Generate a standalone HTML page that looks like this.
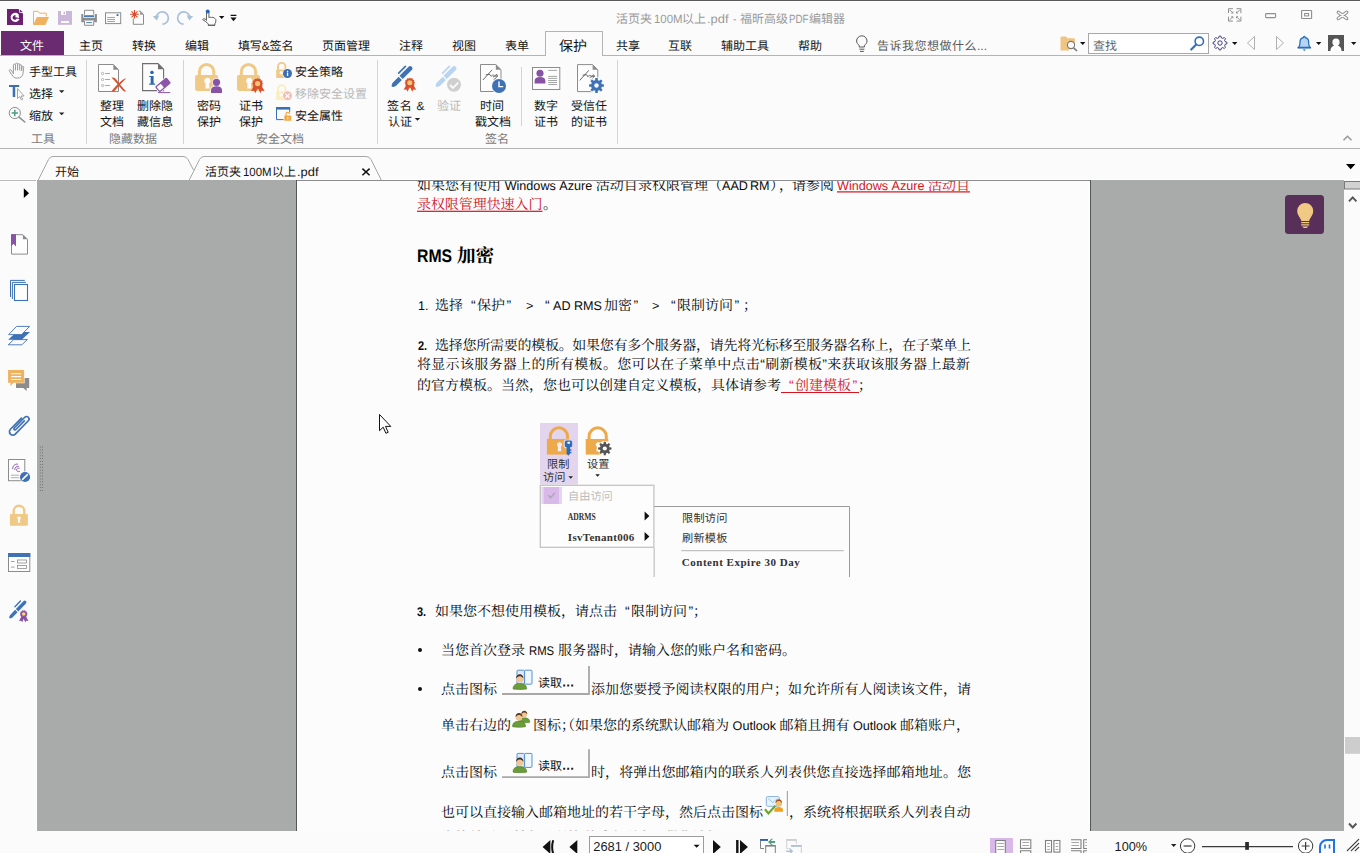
<!DOCTYPE html>
<html lang="zh-CN"><head><meta charset="utf-8"><title>Foxit PDF Editor</title>
<style>
html,body{margin:0;padding:0}
body{width:1360px;height:853px;overflow:hidden;position:relative;background:#fbfbfb;font-family:"Liberation Sans",sans-serif}
.b,.i,.t{position:absolute;display:block}
.t{overflow:visible;text-rendering:geometricPrecision}
.t text,.i text{font-family:"Liberation Sans","Noto Sans CJK SC",sans-serif}
.t text.sf{font-family:"Liberation Sans","Noto Serif CJK SC",serif}
.mono text{font-family:"Liberation Mono",monospace}
#pg{position:absolute;left:0;top:0;width:1360px;height:853px;overflow:hidden}
</style></head>
<body>
<div id="pg">
<div class="b" style="left:0px;top:0px;width:1360px;height:853px;background:#fbfbfb;"></div>
<div class="b" style="left:0px;top:0px;width:1360px;height:1px;background:#5a5a5a;"></div>
<div class="b" style="left:0px;top:1px;width:1360px;height:1px;background:#ffffff;"></div>
<div class="b" style="left:0px;top:55px;width:546px;height:1px;background:#b4b4b4;"></div>
<div class="b" style="left:602px;top:55px;width:758px;height:1px;background:#b4b4b4;"></div>
<div class="b" style="left:545px;top:31px;width:58px;height:1px;background:#b4b4b4;"></div>
<div class="b" style="left:545px;top:31px;width:1px;height:25px;background:#b4b4b4;"></div>
<div class="b" style="left:602px;top:31px;width:1px;height:25px;background:#b4b4b4;"></div>
<div class="b" style="left:1px;top:31px;width:63px;height:24px;background:#6b2b70;"></div>
<div class="b" style="left:0px;top:148px;width:1360px;height:1px;background:#b4b4b4;"></div>
<div class="b" style="left:86px;top:60px;width:1px;height:84px;background:#d4d4d4;"></div>
<div class="b" style="left:183px;top:60px;width:1px;height:84px;background:#d4d4d4;"></div>
<div class="b" style="left:377px;top:60px;width:1px;height:84px;background:#d4d4d4;"></div>
<div class="b" style="left:617px;top:60px;width:1px;height:84px;background:#d4d4d4;"></div>
<div class="b" style="left:521px;top:67px;width:1px;height:59px;background:#d4d4d4;"></div>
<div class="b" style="left:0px;top:179px;width:38px;height:1px;background:#ffffff;"></div>
<div class="b" style="left:382px;top:179px;width:978px;height:1px;background:#ffffff;"></div>
<div class="b" style="left:36px;top:181px;width:1px;height:651px;background:#ffffff;"></div>
<div class="b" style="left:36px;top:831px;width:1308px;height:1px;background:#ffffff;"></div>
<div class="b" style="left:0px;top:181px;width:36px;height:1px;background:#ffffff;"></div>
<div class="b" style="left:37px;top:180px;width:1307px;height:651px;background:#a9abaa;"></div>
<div class="b" style="left:296px;top:180px;width:795px;height:651px;background:#565656;"></div>
<div class="b" style="left:297px;top:181px;width:793px;height:650px;background:#ffffff;"></div>
<div class="b" style="left:298px;top:181px;width:791px;height:650px;background:#fcfcfc;"></div>
<div class="b" style="left:297px;top:180px;width:793px;height:1px;background:#8c8c8c;"></div>
<svg class="t" role="img" aria-label="活页夹" style="left:616.3px;top:11px" width="38" height="18" viewBox="0 -12 38 18" fill="#9a9a9a"><text x="0" y="0" font-size="12" textLength="36" lengthAdjust="spacing">活页夹</text></svg>
<svg class="t" role="img" aria-label="100M" style="left:653.6px;top:11px" width="30.6" height="18" viewBox="0 -12 30.6 18" fill="#9a9a9a"><text x="0" y="0" font-size="12" textLength="28.6" lengthAdjust="spacingAndGlyphs">100M</text></svg>
<svg class="t" role="img" aria-label="以上" style="left:682.2px;top:11px" width="26" height="18" viewBox="0 -12 26 18" fill="#9a9a9a"><text x="0" y="0" font-size="12" textLength="24" lengthAdjust="spacing">以上</text></svg>
<svg class="t" role="img" aria-label=".pdf" style="left:707px;top:11px" width="23.5" height="18" viewBox="0 -12 23.5 18" fill="#9a9a9a"><text x="0" y="0" font-size="12" textLength="21.5" lengthAdjust="spacingAndGlyphs">.pdf</text></svg>
<svg class="t" role="img" aria-label="-" style="left:733px;top:11px" width="5.4" height="18" viewBox="0 -12 5.4 18" fill="#9a9a9a"><text x="0" y="0" font-size="12" textLength="3.4" lengthAdjust="spacingAndGlyphs">-</text></svg>
<svg class="t" role="img" aria-label="福昕高级" style="left:740.4px;top:11px" width="50" height="18" viewBox="0 -12 50 18" fill="#9a9a9a"><text x="0" y="0" font-size="12" textLength="48" lengthAdjust="spacing">福昕高级</text></svg>
<svg class="t" role="img" aria-label="PDF" style="left:789.4px;top:11px" width="21.6" height="18" viewBox="0 -12 21.6 18" fill="#9a9a9a"><text x="0" y="0" font-size="12" textLength="19.6" lengthAdjust="spacingAndGlyphs">PDF</text></svg>
<svg class="t" role="img" aria-label="编辑器" style="left:809.3px;top:11px" width="38" height="18" viewBox="0 -12 38 18" fill="#9a9a9a"><text x="0" y="0" font-size="12" textLength="36" lengthAdjust="spacing">编辑器</text></svg>
<svg class="t" role="img" aria-label="文件" style="left:19.5px;top:38px" width="26" height="18" viewBox="0 -12 26 18" fill="#ffffff"><text x="0" y="0" font-size="12" textLength="24" lengthAdjust="spacing">文件</text></svg>
<svg class="t" role="img" aria-label="主页" style="left:78.5px;top:38px" width="26" height="18" viewBox="0 -12 26 18" fill="#141414"><text x="0" y="0" font-size="12" textLength="24" lengthAdjust="spacing">主页</text></svg>
<svg class="t" role="img" aria-label="转换" style="left:131.5px;top:38px" width="26" height="18" viewBox="0 -12 26 18" fill="#141414"><text x="0" y="0" font-size="12" textLength="24" lengthAdjust="spacing">转换</text></svg>
<svg class="t" role="img" aria-label="编辑" style="left:184.5px;top:38px" width="26" height="18" viewBox="0 -12 26 18" fill="#141414"><text x="0" y="0" font-size="12" textLength="24" lengthAdjust="spacing">编辑</text></svg>
<svg class="t" role="img" aria-label="填写&amp;签名" style="left:237.5px;top:38px" width="57.5" height="18" viewBox="0 -12 57.5 18" fill="#141414"><text x="0" y="0" font-size="12" textLength="23.7" lengthAdjust="spacing">填写</text><text x="23.75" y="0" font-size="12" textLength="8" lengthAdjust="spacingAndGlyphs">&amp;</text><text x="31.6" y="0" font-size="12" textLength="23.9" lengthAdjust="spacing">签名</text></svg>
<svg class="t" role="img" aria-label="页面管理" style="left:321.5px;top:38px" width="50" height="18" viewBox="0 -12 50 18" fill="#141414"><text x="0" y="0" font-size="12" textLength="48" lengthAdjust="spacing">页面管理</text></svg>
<svg class="t" role="img" aria-label="注释" style="left:398.5px;top:38px" width="26" height="18" viewBox="0 -12 26 18" fill="#141414"><text x="0" y="0" font-size="12" textLength="24" lengthAdjust="spacing">注释</text></svg>
<svg class="t" role="img" aria-label="视图" style="left:451.5px;top:38px" width="26" height="18" viewBox="0 -12 26 18" fill="#141414"><text x="0" y="0" font-size="12" textLength="24" lengthAdjust="spacing">视图</text></svg>
<svg class="t" role="img" aria-label="表单" style="left:505px;top:38px" width="26" height="18" viewBox="0 -12 26 18" fill="#141414"><text x="0" y="0" font-size="12" textLength="24" lengthAdjust="spacing">表单</text></svg>
<svg class="t" role="img" aria-label="共享" style="left:615.8px;top:38px" width="26" height="18" viewBox="0 -12 26 18" fill="#141414"><text x="0" y="0" font-size="12" textLength="24" lengthAdjust="spacing">共享</text></svg>
<svg class="t" role="img" aria-label="互联" style="left:667.5px;top:38px" width="26" height="18" viewBox="0 -12 26 18" fill="#141414"><text x="0" y="0" font-size="12" textLength="24" lengthAdjust="spacing">互联</text></svg>
<svg class="t" role="img" aria-label="辅助工具" style="left:720.5px;top:38px" width="50" height="18" viewBox="0 -12 50 18" fill="#141414"><text x="0" y="0" font-size="12" textLength="48" lengthAdjust="spacing">辅助工具</text></svg>
<svg class="t" role="img" aria-label="帮助" style="left:797.5px;top:38px" width="26" height="18" viewBox="0 -12 26 18" fill="#141414"><text x="0" y="0" font-size="12" textLength="24" lengthAdjust="spacing">帮助</text></svg>
<svg class="t" role="img" aria-label="保护" style="left:558.8px;top:36.6px" width="30" height="21" viewBox="0 -14 30 21" fill="#141414"><text x="0" y="0" font-size="14" textLength="28" lengthAdjust="spacing">保护</text></svg>
<svg class="t" role="img" aria-label="告诉我您想做什么..." style="left:876.5px;top:38px" width="112" height="18" viewBox="0 -12 112 18" fill="#5a5a5a"><text x="0" y="0" font-size="12" textLength="99.5" lengthAdjust="spacing">告诉我您想做什么</text><text x="100" y="0" font-size="12" textLength="10" lengthAdjust="spacingAndGlyphs">...</text></svg>
<div class="b" style="left:1088px;top:33px;width:121px;height:21px;background:#ffffff;border:1px solid #a8a8a8;box-sizing:border-box;"></div>
<svg class="t" role="img" aria-label="查找" style="left:1092.5px;top:37.5px" width="26" height="18" viewBox="0 -12 26 18" fill="#666666"><text x="0" y="0" font-size="12" textLength="24" lengthAdjust="spacing">查找</text></svg>
<svg class="t" role="img" aria-label="手型工具" style="left:28.6px;top:64.2px" width="50" height="18" viewBox="0 -12 50 18" fill="#141414"><text x="0" y="0" font-size="12" textLength="48" lengthAdjust="spacing">手型工具</text></svg>
<svg class="t" role="img" aria-label="选择" style="left:28.6px;top:86px" width="26" height="18" viewBox="0 -12 26 18" fill="#141414"><text x="0" y="0" font-size="12" textLength="24" lengthAdjust="spacing">选择</text></svg>
<svg class="t" role="img" aria-label="缩放" style="left:28.6px;top:108.1px" width="26" height="18" viewBox="0 -12 26 18" fill="#141414"><text x="0" y="0" font-size="12" textLength="24" lengthAdjust="spacing">缩放</text></svg>
<svg class="t" role="img" aria-label="整理" style="left:99.5px;top:97.6px" width="26" height="18" viewBox="0 -12 26 18" fill="#141414"><text x="0" y="0" font-size="12" textLength="24" lengthAdjust="spacing">整理</text></svg>
<svg class="t" role="img" aria-label="文档" style="left:99.5px;top:113.6px" width="26" height="18" viewBox="0 -12 26 18" fill="#141414"><text x="0" y="0" font-size="12" textLength="24" lengthAdjust="spacing">文档</text></svg>
<svg class="t" role="img" aria-label="删除隐" style="left:137px;top:97.6px" width="38" height="18" viewBox="0 -12 38 18" fill="#141414"><text x="0" y="0" font-size="12" textLength="36" lengthAdjust="spacing">删除隐</text></svg>
<svg class="t" role="img" aria-label="藏信息" style="left:137px;top:113.6px" width="38" height="18" viewBox="0 -12 38 18" fill="#141414"><text x="0" y="0" font-size="12" textLength="36" lengthAdjust="spacing">藏信息</text></svg>
<svg class="t" role="img" aria-label="密码" style="left:196.5px;top:97.6px" width="26" height="18" viewBox="0 -12 26 18" fill="#141414"><text x="0" y="0" font-size="12" textLength="24" lengthAdjust="spacing">密码</text></svg>
<svg class="t" role="img" aria-label="保护" style="left:196.5px;top:113.6px" width="26" height="18" viewBox="0 -12 26 18" fill="#141414"><text x="0" y="0" font-size="12" textLength="24" lengthAdjust="spacing">保护</text></svg>
<svg class="t" role="img" aria-label="证书" style="left:238.5px;top:97.6px" width="26" height="18" viewBox="0 -12 26 18" fill="#141414"><text x="0" y="0" font-size="12" textLength="24" lengthAdjust="spacing">证书</text></svg>
<svg class="t" role="img" aria-label="保护" style="left:238.5px;top:113.6px" width="26" height="18" viewBox="0 -12 26 18" fill="#141414"><text x="0" y="0" font-size="12" textLength="24" lengthAdjust="spacing">保护</text></svg>
<svg class="t" role="img" aria-label="安全策略" style="left:294.8px;top:64.3px" width="50" height="18" viewBox="0 -12 50 18" fill="#141414"><text x="0" y="0" font-size="12" textLength="48" lengthAdjust="spacing">安全策略</text></svg>
<svg class="t" role="img" aria-label="移除安全设置" style="left:294.8px;top:85.7px" width="74" height="18" viewBox="0 -12 74 18" fill="#b9b9b9"><text x="0" y="0" font-size="12" textLength="72" lengthAdjust="spacing">移除安全设置</text></svg>
<svg class="t" role="img" aria-label="安全属性" style="left:294.8px;top:107.9px" width="50" height="18" viewBox="0 -12 50 18" fill="#141414"><text x="0" y="0" font-size="12" textLength="48" lengthAdjust="spacing">安全属性</text></svg>
<svg class="t" role="img" aria-label="签名 &amp;" style="left:386.5px;top:97.6px" width="39.5" height="18" viewBox="0 -12 39.5 18" fill="#141414"><text x="0" y="0" font-size="12" textLength="24.7" lengthAdjust="spacing">签名</text><text x="29.5" y="0" font-size="12" textLength="8" lengthAdjust="spacingAndGlyphs">&amp;</text></svg>
<svg class="t" role="img" aria-label="认证" style="left:387.5px;top:113.6px" width="26" height="18" viewBox="0 -12 26 18" fill="#141414"><text x="0" y="0" font-size="12" textLength="24" lengthAdjust="spacing">认证</text></svg>
<svg class="t" role="img" aria-label="验证" style="left:436.5px;top:97.6px" width="26" height="18" viewBox="0 -12 26 18" fill="#b9b9b9"><text x="0" y="0" font-size="12" textLength="24" lengthAdjust="spacing">验证</text></svg>
<svg class="t" role="img" aria-label="时间" style="left:479.8px;top:97.6px" width="26" height="18" viewBox="0 -12 26 18" fill="#141414"><text x="0" y="0" font-size="12" textLength="24" lengthAdjust="spacing">时间</text></svg>
<svg class="t" role="img" aria-label="戳文档" style="left:474.5px;top:113.6px" width="38" height="18" viewBox="0 -12 38 18" fill="#141414"><text x="0" y="0" font-size="12" textLength="36" lengthAdjust="spacing">戳文档</text></svg>
<svg class="t" role="img" aria-label="数字" style="left:533.5px;top:97.6px" width="26" height="18" viewBox="0 -12 26 18" fill="#141414"><text x="0" y="0" font-size="12" textLength="24" lengthAdjust="spacing">数字</text></svg>
<svg class="t" role="img" aria-label="证书" style="left:533.5px;top:113.6px" width="26" height="18" viewBox="0 -12 26 18" fill="#141414"><text x="0" y="0" font-size="12" textLength="24" lengthAdjust="spacing">证书</text></svg>
<svg class="t" role="img" aria-label="受信任" style="left:571px;top:97.6px" width="38" height="18" viewBox="0 -12 38 18" fill="#141414"><text x="0" y="0" font-size="12" textLength="36" lengthAdjust="spacing">受信任</text></svg>
<svg class="t" role="img" aria-label="的证书" style="left:571px;top:113.6px" width="38" height="18" viewBox="0 -12 38 18" fill="#141414"><text x="0" y="0" font-size="12" textLength="36" lengthAdjust="spacing">的证书</text></svg>
<svg class="t" role="img" aria-label="工具" style="left:30.5px;top:131px" width="26" height="18" viewBox="0 -12 26 18" fill="#7a7a7a"><text x="0" y="0" font-size="12" textLength="24" lengthAdjust="spacing">工具</text></svg>
<svg class="t" role="img" aria-label="隐藏数据" style="left:108.5px;top:131px" width="50" height="18" viewBox="0 -12 50 18" fill="#7a7a7a"><text x="0" y="0" font-size="12" textLength="48" lengthAdjust="spacing">隐藏数据</text></svg>
<svg class="t" role="img" aria-label="安全文档" style="left:255.5px;top:131px" width="50" height="18" viewBox="0 -12 50 18" fill="#7a7a7a"><text x="0" y="0" font-size="12" textLength="48" lengthAdjust="spacing">安全文档</text></svg>
<svg class="t" role="img" aria-label="签名" style="left:484.8px;top:131px" width="26" height="18" viewBox="0 -12 26 18" fill="#7a7a7a"><text x="0" y="0" font-size="12" textLength="24" lengthAdjust="spacing">签名</text></svg>
<svg class="t" role="img" aria-label="开始" style="left:54.8px;top:163.6px" width="26" height="18" viewBox="0 -12 26 18" fill="#141414"><text x="0" y="0" font-size="12" textLength="24" lengthAdjust="spacing">开始</text></svg>
<svg class="t" role="img" aria-label="活页夹" style="left:205.4px;top:163.8px" width="38" height="18" viewBox="0 -12 38 18" fill="#141414"><text x="0" y="0" font-size="12" textLength="36" lengthAdjust="spacing">活页夹</text></svg>
<svg class="t" role="img" aria-label="100M" style="left:242.8px;top:163.8px" width="30.6" height="18" viewBox="0 -12 30.6 18" fill="#141414"><text x="0" y="0" font-size="12" textLength="28.6" lengthAdjust="spacingAndGlyphs">100M</text></svg>
<svg class="t" role="img" aria-label="以上" style="left:271.8px;top:163.8px" width="26" height="18" viewBox="0 -12 26 18" fill="#141414"><text x="0" y="0" font-size="12" textLength="24" lengthAdjust="spacing">以上</text></svg>
<svg class="t" role="img" aria-label=".pdf" style="left:296.8px;top:163.8px" width="23.5" height="18" viewBox="0 -12 23.5 18" fill="#141414"><text x="0" y="0" font-size="12" textLength="21.5" lengthAdjust="spacingAndGlyphs">.pdf</text></svg>
<svg class="i" style="left:0;top:0" width="1360" height="853" viewBox="0 0 1360 853"><path d="M7 9h11.5l4.5 4.5V25H7z" fill="#6b2170"/><path d="M19.3 9l3.7 3.7h-3.7z" fill="#fff"/><path d="M20 9.4l2.6 2.6H20z" fill="#6b2170"/><path d="M18.6 14.2a4.6 4.6 0 1 0 .9 4.8l-2.6-.6a2.2 2.2 0 1 1-.6-2.6l-1.5 1.2 4.3 1z" fill="#fff"/><path d="M33.5 24.4V11.3h4.6l1.6 1.9h6.6v3.2" fill="none" stroke="#f0b25e" stroke-width="1"/><path d="M33.2 24.9l3.6-7.9H49l-3.7 7.9z" fill="#f0b25e"/><path d="M58 11h14v13.8H58z" fill="#cbb8d8"/><path d="M61 11h5v4h-5zM61 21h8v2h-8z" fill="#fbfbfb"/><path d="M63.6 11.8h1.4v2.4h-1.4z" fill="#cbb8d8"/><path d="M84.5 14.5v-4.2h9.2v4.2" fill="none" stroke="#8c8c8c"/><path d="M84 15.2h10.2v1.8H84z" fill="#4a7ebb"/><path d="M81.3 14h2v3.8h11.6V14h2v8.2h-2.6v-1.6h-10.4v1.600h-2.600z" fill="#8c8c8c"/><path d="M84.5 21v4.3h9.2V21" fill="none" stroke="#8c8c8c"/><path d="M86.3 22.6h5.6" stroke="#4a7ebb" stroke-width="1"/><rect x="105.5" y="12.8" width="15.2" height="10.8" fill="none" stroke="#8c8c8c"/><rect x="116.6" y="14.2" width="1.8" height="1.8" fill="#2f66b3"/><path d="M107.2 17.5h7.8M107.2 19.5h7.8M107.2 21.5h7.8" stroke="#9a9a9a" stroke-width="0.9"/><path d="M133.3 18.5v5.8h10.2V14.3l-3.2-3.2h-1.600" fill="none" stroke="#8c8c8c"/><path d="M140 10.9l3.8 3.8H140z" fill="#9a9a9a"/><path d="M134.5 10v8.6M130.2 14.3h8.6M131.5 11.3l6 6M137.500 11.300l-6 6" stroke="#d9482b" stroke-width="1.1"/><path d="M156.2 17.5a6.1 6.1 0 1 1 6.2 6.6" fill="none" stroke="#a9c1d9" stroke-width="1.7"/><path d="M152.8 16.2l6.6-.9-2.6 5.2z" fill="#a9c1d9"/><path d="M189.8 17.5a6.1 6.1 0 1 0-6.2 6.6" fill="none" stroke="#a9c1d9" stroke-width="1.7"/><path d="M193.2 16.2l-6.6-.9 2.6 5.2z" fill="#a9c1d9"/><path d="M206.5 20.5v-8a1.2 1.2 0 0 1 2.4 0v5.2l1.2-.6 1.5.4 1.4-.2 1.6.9 1.2 1.2v2.6l-.9 1.8v1.4h-6.600v-1.400l-3.200-2.600-2.400-1.400 1-1.200 2 .6z" fill="#fdfdfd" stroke="#555" stroke-width="0.9" stroke-linejoin="round"/><circle cx="207.7" cy="11.4" r="2" fill="#2f66b3"/><path d="M208 25.3h7" stroke="#555" stroke-width="0.9"/><path d="M219 16h5.4l-2.7 3z" fill="#111"/><path d="M230.6 14.8h5.8v1.2h-5.800zM230.400 17.400h6.200l-3.100 3.800z" fill="#111"/><g fill="none" stroke="#8e8e8e" stroke-width="1"><path d="M1228.5 8.7H1232.9M1228.5 8.7V13.1M1232.9 13.1H1231.3M1232.9 13.1V11.5M1229.7 9.9L1232.3 12.5M1240.9 8.7H1236.5M1240.9 8.7V13.1M1236.5 13.1H1238.1M1236.5 13.1V11.5M1239.7 9.9L1237.1 12.5M1228.5 21.1H1232.9M1228.5 21.1V16.7M1232.9 16.7H1231.3M1232.9 16.7V18.3M1229.7 19.9L1232.3 17.3M1240.9 21.1H1236.5M1240.9 21.1V16.7M1236.5 16.7H1238.1M1236.5 16.7V18.3M1239.7 19.9L1237.1 17.3"/><rect x="1265.6" y="13.6" width="10" height="4" rx=".8" stroke-width="1.1"/><rect x="1301.6" y="10.5" width="10" height="8" rx=".5" stroke-width="1.1"/><rect x="1304.6" y="13.5" width="4" height="2.400" stroke-width="1"/></g><path d="M1338.400 12.400l8.200 6M1346.600 12.400l-8.200 6" stroke="#8e8e8e" stroke-width="3.600" stroke-linecap="round"/><path d="M1338.400 12.400l8.200 6M1346.600 12.400l-8.200 6" stroke="#fbfbfb" stroke-width="1.500" stroke-linecap="round"/><path d="M859.2 47v-1.6c-1.6-1.2-2.6-2.6-2.6-4.4a5.2 5.2 0 0 1 10.4 0c0 1.8-1 3.2-2.6 4.400V47z" fill="none" stroke="#555" stroke-width="1"/><path d="M859.4 49.2h5M860 51.4h3.8" stroke="#555" stroke-width="1"/><path d="M1061 50.5V37h5l1.4 1.8h7V43" fill="#f0c483" stroke="#f0c483"/><path d="M1061 50.5h8V42h-8z" fill="#f0c483"/><circle cx="1071" cy="45" r="3.6" fill="#fbfbfb" stroke="#777" stroke-width="1.1"/><path d="M1073.6 47.8l3.4 3.2" stroke="#777" stroke-width="1.6"/><path d="M1080 42h5.4l-2.7 3z" fill="#111"/><circle cx="1199.3" cy="41.3" r="4.2" fill="none" stroke="#2f6fc2" stroke-width="1.6"/><path d="M1196.2 44.6l-5 5" stroke="#2f6fc2" stroke-width="2.1" stroke-linecap="round"/><path d="M1227.0 42.3L1227.0 43.7L1225.0 44.5L1224.6 45.5L1225.4 47.4L1224.4 48.4L1222.5 47.6L1221.5 48.0L1220.7 50.0L1219.3 50.0L1218.5 48.0L1217.5 47.6L1215.6 48.4L1214.6 47.4L1215.4 45.5L1215.0 44.5L1213.0 43.7L1213.0 42.3L1215.0 41.5L1215.4 40.5L1214.6 38.6L1215.6 37.6L1217.5 38.4L1218.5 38.0L1219.3 36.0L1220.7 36.0L1221.5 38.0L1222.5 38.4L1224.4 37.6L1225.4 38.6L1224.6 40.5L1225.0 41.5z" fill="none" stroke="#2e2e6e" stroke-width="0.9" stroke-linejoin="round"/><circle cx="1220" cy="43" r="2.2" fill="none" stroke="#2e2e6e" stroke-width="0.9"/><path d="M1232 42h5.4l-2.7 3z" fill="#111"/><path d="M1254.5 36.5v13l-7-6.5z" fill="none" stroke="#b0b0b0"/><path d="M1276.5 36.5v13l7-6.5z" fill="none" stroke="#b0b0b0"/><path d="M1298.300 47.500c1.700-1.100 1.700-3 1.700-5.700a4.200 4.200 0 0 1 3.400-4.100v-.4a.9.9 0 0 1 1.800 0v.4a4.200 4.200 0 0 1 3.400 4.100c0 2.700 0 4.600 1.700 5.700z" fill="#b5d5f2" stroke="#2b6dbf" stroke-width="1.300" stroke-linejoin="round"/><path d="M1297.500 47.700h13.600" stroke="#2b6dbf" stroke-width="1.500"/><path d="M1302.500 49.400h3.600l-1.800 1.700z" fill="#2b6dbf"/><path d="M1316 42h5.4l-2.7 3z" fill="#111"/><rect x="1328" y="35" width="16" height="16" fill="#555"/><path d="M1330.500 51c0-3.400 1.800-4.600 3.700-5.200-1.200-.8-1.800-2-1.800-3.600a3.600 3.600 0 0 1 7.200 0c0 1.600-.6 2.800-1.800 3.600 1.900.6 3.700 1.800 3.700 5.200z" fill="#fff"/><path d="M1351 42h5.4l-2.7 3z" fill="#111"/><path d="M1343.500 140.300l4-4 4 4" fill="none" stroke="#9a9a9a" stroke-width="1.6"/><path d="M1346 164h9.400l-4.700 5.200z" fill="#000"/><path d="M38 180.500L48.500 159.500Q50 156.500 53 156.500H183Q186.500 156.500 188 159.500L193.500 170" fill="none" stroke="#a6a6a6"/><path d="M189 180.500L199.500 159.500Q201 156.500 204 156.500H366Q369.500 156.500 371 159.500L381.500 180.500" fill="none" stroke="#a6a6a6"/><path d="M0 180.500H36" stroke="#b9b9b9"/><path d="M362.400 168.600l7.200 6.600M369.600 168.600l-7.200 6.600" stroke="#111" stroke-width="1.5"/><path d="M23.800 188.300v9.800l5.200-4.900z" fill="#000"/><path d="M59 90.200h5.400l-2.700 2.800zM59 112.400h5.400l-2.700 2.800zM414.800 118h5.400l-2.700 2.800z" fill="#222"/><path d="M13.400 73.400l-2.300-3.300c-.9-1.200-2.400-.1-1.600 1.100l3.300 4.900c1.200 1.700 2.700 2 4.700 2 3.300 0 5.200-1.900 5.500-4.700l.7-6c.1-1.300-1.500-1.500-1.800-.3l-.5 3.300M13.400 73.400v-8.300c0-1.400 2.100-1.400 2.100 0v4.900m0-5.900c0-1.400 2.100-1.400 2.100 0v5.900m0-5.400c0-1.400 2.100-1.400 2.100 0v5.400m0-4.400c0-1.300 2-1.300 2 0v4.600" fill="none" stroke="#9b9b9b" stroke-width="1" stroke-linecap="round" stroke-linejoin="round"/><path d="M9 85h10.200v2.100H9zM12.700 87h2.500v10h-2.500z" fill="#3c6eb4"/><path d="M17.500 88.500v10l2.300-2 1.600 3.400 1.300-.6-1.600-3.300h3z" fill="#fbfbfb" stroke="#9b9b9b" stroke-width="0.900" stroke-linejoin="round"/><circle cx="14.800" cy="113" r="5.600" fill="none" stroke="#8e8e8e" stroke-width="1"/><path d="M19 117.200l5.800 4.800" stroke="#8e8e8e" stroke-width="1.600" stroke-linecap="round"/><path d="M11.600 113h6.400M14.800 109.800v6.400" stroke="#4f9f7f" stroke-width="1.500"/><path d="M98.5 64.5H113.3L118.5 69.7V91.5H98.5z" fill="#fdfdfd" stroke="#8c8c8c" stroke-width="1"/><path d="M113.3 64.5v5.2h5.2z" fill="#8c8c8c"/><circle cx="102.600" cy="73.5" r="1.150" fill="none" stroke="#9a9a9a" stroke-width="0.700"/><path d="M105.200 73.500h4.800" stroke="#9a9a9a" stroke-width="0.900"/><circle cx="102.600" cy="79.5" r="1.150" fill="none" stroke="#9a9a9a" stroke-width="0.700"/><path d="M105.200 79.500h4.800" stroke="#9a9a9a" stroke-width="0.900"/><circle cx="102.600" cy="85.5" r="1.150" fill="none" stroke="#9a9a9a" stroke-width="0.700"/><path d="M105.200 85.500h4.800" stroke="#9a9a9a" stroke-width="0.900"/><path d="M111.600 77.800c1.800-.8 3.400.2 4.800 2 2.800 3.600 6 7.600 9.800 11.700-1.400.3-2.600-.3-3.600-1.300-3-3.300-5.600-6.500-7.800-9.200-1-1.200-2.200-2.300-3.200-3.200z" fill="#d9502f"/><path d="M126.300 78.300c-1.200.1-3 .9-4.800 2.400-3.700 3.100-7.200 6.700-10 10.600 1.300.6 2.600.3 3.500-.7 3.100-4 6.900-8.100 11.300-12.300z" fill="#d9502f"/><path d="M142.6 63.6H158.0L163.6 69.2V90.6H142.6z" fill="#fdfdfd" stroke="#6e6e6e" stroke-width="1.1"/><path d="M158.0 63.6v5.6h5.6z" fill="#6e6e6e"/><path d="M152 70.600l1.900 1.800-1.900 1.800-1.900-1.800zM149.200 76h4.400v7.600h1.600v1.100h-6v-1.100h1.500v-6.500h-1.500z" fill="#2c68b0"/><rect x="150.300" y="70.700" width="3.300" height="3.300" rx="1.600" fill="#2c68b0"/><g transform="translate(163 84.900) rotate(-40)"><rect x="-8.300" y="-4.500" width="16.600" height="9" rx="1.700" fill="#fbfbfb"/><rect x="-7.500" y="-3.700" width="15" height="7.400" rx="1.300" fill="#8c55a8"/><rect x="-6.300" y="-2.500" width="5.400" height="5" rx=".9" fill="#fbfbfb"/></g><path d="M158 92.600h12.200" stroke="#8c55a8" stroke-width="1"/><g transform="translate(195.1 63) scale(1.0)"><path d="M4.300 13V8.700a7.200 7.200 0 0 1 14.400 0V13" fill="none" stroke="#f0c986" stroke-width="3"/><rect x="0" y="12" width="23" height="15.900" rx="1.800" fill="#f0c986"/><path d="M12.300 14.800a3.200 3.200 0 0 1 1.700 5.900l.4 4.900h-4.200l.4-4.900a3.200 3.200 0 0 1 1.700-5.900z" fill="#fbfbfb"/></g><g transform="translate(216.5 82.3) scale(1.0)"><circle cx="0" cy="0" r="4.300" fill="#fbfbfb"/><path d="M-6.200 11.200v-3.600c0-3 2.400-4.600 6.200-4.600s6.200 1.600 6.200 4.600v3.600z" fill="#fbfbfb"/><circle cx="0" cy="0" r="3.600" fill="#8753a6"/><path d="M-5.500 10.600V7.900c0-2.600 2-3.900 5.500-3.900s5.500 1.300 5.500 3.900v2.700z" fill="#8753a6"/></g><g transform="translate(237 63) scale(1.0)"><path d="M4.300 13V8.700a7.200 7.200 0 0 1 14.400 0V13" fill="none" stroke="#f0c986" stroke-width="3"/><rect x="0" y="12" width="23" height="15.900" rx="1.800" fill="#f0c986"/><path d="M12.300 14.800a3.200 3.200 0 0 1 1.700 5.900l.4 4.900h-4.200l.4-4.900a3.200 3.200 0 0 1 1.700-5.900z" fill="#fbfbfb"/></g><path d="M254.600 86.500l-3.600 6.200 3-.3 1.300 2.400 2.500-5.500 2.500 5.500 1.300-2.400 3 .3-3.600-6.200z" fill="#d9502f" transform="translate(0 -1.600)"/><path d="M262.90 83.60L261.90 84.75L262.19 86.25L260.75 86.75L260.25 88.19L258.75 87.90L257.60 88.90L256.45 87.90L254.95 88.19L254.45 86.750L253.010 86.250L253.300 84.750L252.300 83.600L253.300 82.450L253.010 80.950L254.450 80.450L254.950 79.010L256.450 79.300L257.600 78.300L258.750 79.300L260.250 79.010L260.750 80.450L262.190 80.950L261.900 82.450z" fill="#d9502f" stroke="#d9502f" stroke-width="0.6" stroke-linejoin="round"/><circle cx="257.6" cy="83.6" r="2.6" fill="#f5c574"/><path d="M278.0 69.8v-3.200a3.700 3.700 0 0 1 7.400 0v3.200" fill="none" stroke="#f0c986" stroke-width="1.9"/><rect x="276.2" y="69.4" width="11" height="8.600" rx=".8" fill="#f0c986"/><circle cx="281.2" cy="72.7" r="1.7" fill="#fbfbfb"/><circle cx="287.500" cy="73.500" r="5.100" fill="#fbfbfb"/><circle cx="287.500" cy="73.500" r="4.500" fill="#3a6fb5"/><path d="M286.900 72.600h1.300v3.500h-1.300zM286.900 70.700h1.300v1.200h-1.300z" fill="#fff"/><path d="M278.0 92.0v-3.200a3.700 3.700 0 0 1 7.400 0v3.200" fill="none" stroke="#faedc0" stroke-width="1.9"/><rect x="276.2" y="91.60000000000001" width="11" height="8.600" rx=".8" fill="#faedc0"/><circle cx="281.2" cy="94.9" r="1.7" fill="#fbfbfb"/><circle cx="287.500" cy="95.800" r="5.100" fill="#fbfbfb"/><circle cx="287.500" cy="95.800" r="4.500" fill="#f2bdb4"/><path d="M285.300 93.600l4.400 4.400M289.700 93.600l-4.400 4.400" stroke="#fff" stroke-width="1.100"/><path d="M276 107h14.200v2.600H276z" fill="#3a6fb5"/><path d="M276.500 109v10.600h7M289.700 109v2.800" fill="none" stroke="#3a6fb5" stroke-width="1"/><path d="M286 116v-1.600a1.900 1.900 0 0 1 3.800-.4" fill="none" stroke="#f0ab45" stroke-width="1.200"/><rect x="284.300" y="115.600" width="7" height="5.200" rx=".5" fill="#f0ab45"/><path d="M287.400 117.200h.9v2h-.9z" fill="#fbfbfb"/><g transform="translate(391.8 86.8) rotate(-45)"><path d="M0 0c1-1.600 2.600-2.300 4.200-2.300H12v4.600H4.200C2.600 2.300 1 1.600 0 0z" fill="#3f72b5"/><path d="M13.200-2.300h12.800a2.300 2.300 0 0 1 0 4.600H13.200z" fill="#3f72b5"/><path d="M14.500-4.800h9.500" stroke="#3f72b5" stroke-width="1.700" stroke-linecap="round"/></g><path d="M407 85.500l-3.400 6 2.800-.3 1.200 2.200 2.300-5 2.300 5 1.200-2.200 2.800.3-3.400-6z" fill="#d9502f" transform="translate(0 -1.700)"/><path d="M414.70 82.80L413.78 83.87L414.04 85.25L412.71 85.71L412.25 87.04L410.87 86.78L409.80 87.70L408.73 86.78L407.35 87.04L406.89 85.710L405.560 85.250L405.820 83.870L404.900 82.800L405.820 81.730L405.560 80.350L406.890 79.890L407.350 78.560L408.730 78.820L409.800 77.900L410.870 78.820L412.250 78.560L412.710 79.890L414.040 80.350L413.780 81.730z" fill="#d9502f" stroke="#d9502f" stroke-width="0.6" stroke-linejoin="round"/><circle cx="409.8" cy="82.8" r="2.5" fill="#f5c574"/><g transform="translate(435.8 86.8) rotate(-45)"><path d="M0 0c1-1.600 2.600-2.300 4.200-2.300H12v4.600H4.200C2.600 2.300 1 1.600 0 0z" fill="#b9d4f0"/><path d="M13.200-2.300h12.800a2.300 2.300 0 0 1 0 4.600H13.200z" fill="#b9d4f0"/><path d="M14.500-4.800h9.500" stroke="#b9d4f0" stroke-width="1.700" stroke-linecap="round"/></g><circle cx="454" cy="84.800" r="7.600" fill="#fbfbfb"/><circle cx="454" cy="84.800" r="7" fill="#cfcfcf"/><path d="M450 85l3 3 5.200-5.400" fill="none" stroke="#fbfbfb" stroke-width="1.800"/><path d="M480.5 64.5H495.8L501.0 69.7V91.5H480.5z" fill="#fdfdfd" stroke="#8c8c8c" stroke-width="1"/><path d="M495.8 64.5v5.2h5.2z" fill="#8c8c8c"/><g transform="translate(483.2 70.2)" fill="none" stroke="#444" stroke-width="0.8" stroke-linecap="round"><path d="M0 9.500L8.600 0"/><path d="M3 4.600c2.400-.8 4-.6 4.200.2.200.900.300 1.600 1.200.900 1-.8 1.600-1.200 2.200-.6.600.700 1.200.500 2-.3.900-.900 2-.500 1.500.700-.5 1.300-1.600 3-3.300 3.800"/><path d="M10 6.800c1.600-.9 3-1.200 4.200-1"/></g><circle cx="499" cy="86" r="7.700" fill="#fbfbfb"/><circle cx="499" cy="86" r="7" fill="#3f72b5"/><path d="M499 81.600v5h4.200" fill="none" stroke="#fff" stroke-width="1.400"/><rect x="532.500" y="67.500" width="27.300" height="22" fill="#fdfdfd" stroke="#8c8c8c" stroke-width="1"/><g transform="translate(540 73.2) scale(0.98)"><circle cx="0" cy="0" r="4.300" fill="#fbfbfb"/><path d="M-6.200 11.200v-3.600c0-3 2.400-4.600 6.200-4.600s6.200 1.600 6.200 4.600v3.600z" fill="#fbfbfb"/><circle cx="0" cy="0" r="3.600" fill="#8753a6"/><path d="M-5.500 10.600V7.900c0-2.600 2-3.900 5.500-3.900s5.500 1.300 5.500 3.900v2.700z" fill="#8753a6"/></g><path d="M548.200 70.400h8.800M548.200 76.400h8.800M548.200 78.400h8.800M548.200 80.500h8.800M548.200 82.500h8.800M548.200 84.500h8.800" stroke="#9a9a9a" stroke-width="0.900"/><path d="M577.5 64.6H592.5999999999999L597.8 69.8V91.6H577.5z" fill="#fdfdfd" stroke="#8c8c8c" stroke-width="1"/><path d="M592.5999999999999 64.6v5.2h5.2z" fill="#8c8c8c"/><g transform="translate(580 70.6)" fill="none" stroke="#444" stroke-width="0.8" stroke-linecap="round"><path d="M0 9.500L8.600 0"/><path d="M3 4.600c2.400-.8 4-.6 4.200.2.200.900.300 1.600 1.200.900 1-.8 1.600-1.200 2.200-.6.600.700 1.200.500 2-.3.900-.900 2-.500 1.500.700-.5 1.300-1.600 3-3.300 3.800"/><path d="M10 6.800c1.600-.9 3-1.200 4.200-1"/></g><circle cx="596.500" cy="85.500" r="8.300" fill="#fbfbfb"/><path d="M601.83 84.13L603.90 84.30L603.90 86.70L601.83 86.87L601.23 88.30L602.58 89.89L600.89 91.58L599.30 90.23L597.87 90.83L597.70 92.900L595.300 92.900L595.130 90.830L593.700 90.230L592.110 91.580L590.420 89.890L591.770 88.300L591.170 86.870L589.100 86.700L589.100 84.300L591.170 84.130L591.770 82.700L590.420 81.110L592.110 79.420L593.700 80.770L595.130 80.170L595.300 78.100L597.700 78.100L597.870 80.170L599.300 80.770L600.890 79.420L602.580 81.110L601.230 82.700z" fill="#3f72b5"/><circle cx="596.5" cy="85.5" r="2.2" fill="#fbfbfb"/><path d="M11.5 234.7H22.9L27.5 239.29999999999998V254.1H11.5z" fill="#fdfdfd" stroke="#8c8c8c" stroke-width="1"/><path d="M22.9 234.7v4.6h4.6z" fill="#8c8c8c"/><path d="M11 234.200h5v12.200l-2.500-2.600-2.500 2.600z" fill="#8753a6"/><path d="M10.500 297v-16.600h14.300M12.400 299v-16.600h13.500" fill="none" stroke="#3f72b5" stroke-width="1"/><rect x="14.500" y="284.500" width="13" height="16" fill="#fdfdfd" stroke="#3f72b5" stroke-width="1.100"/><path d="M13.800 339.600h13.600l-5.600 5.200H8.200z" fill="#fbfbfb" stroke="#3f72b5" stroke-width="0.900"/><path d="M16.500 332h13.500l-8.300 7.800H8.100z" fill="#3f72b5"/><path d="M16.600 326.400h13l-8 8.200H8.600z" fill="#fbfbfb" stroke="#3f72b5" stroke-width="0.900"/><path d="M16 378h13.200v10h-2.600l.2 3-3.600-3H16z" fill="#8c8c8c"/><path d="M7.600 369.600h17v13.600H13.800l-3.600 3.600.3-3.600H7.600z" fill="#fbfbfb"/><path d="M8.100 370.100h16v12.600H13.400l-2.900 3.600V382.700H8.100z" fill="#f0b25e"/><path d="M11 373.700h10M11 376.600h10M11 379.500h10" stroke="#fbfbfb" stroke-width="1.100"/><g transform="translate(19.300 425.100) rotate(-45.500)" fill="none" stroke="#3f72b5" stroke-width="1.700" stroke-linecap="round"><path d="M6.500-3.400H-9.200a3.400 3.400 0 0 0 0 6.800H9.400a2.500 2.500 0 0 0 0-5H-5.600a1.100 1.100 0 0 0 0 2.200H6.500"/></g><rect x="8.500" y="459.500" width="16.300" height="21.200" fill="#fdfdfd" stroke="#8c8c8c"/><path d="M12.600 468.600c.2-3 2.200-4.800 5-4.600M14.800 469.600c.1-2.400 1.600-3.500 3.700-3.300M19.300 468.200c-1.400-.6-2.700.2-2.700 1.600 0 1.500 1.500 2.300 3 1.600" fill="none" stroke="#8753a6" stroke-width="0.900" stroke-linecap="round"/><path d="M11 475.200h8M11 477.700h8" stroke="#9a9a9a" stroke-width="0.800"/><circle cx="25" cy="477" r="5.700" fill="#fbfbfb"/><circle cx="25" cy="477" r="5.100" fill="#3f72b5"/><path d="M22.600 479.400l4.800-4.800" stroke="#fff" stroke-width="1.500" stroke-linecap="round"/><path d="M13.700 515v-4a5.300 5.300 0 0 1 10.600 0v4" fill="none" stroke="#f0c986" stroke-width="2.400"/><rect x="9.900" y="514" width="18" height="11.800" rx="1" fill="#f0c986"/><path d="M19 516.400a1.700 1.700 0 0 1 .9 3.200l.3 3.100h-2.400l.3-3.100a1.700 1.700 0 0 1 .9-3.200z" fill="#fbfbfb"/><rect x="8.500" y="553.500" width="21.300" height="18" fill="#fdfdfd" stroke="#8c8c8c"/><rect x="8" y="553" width="22.300" height="4" fill="#3f72b5"/><rect x="17.400" y="560" width="9.200" height="3" fill="none" stroke="#8c8c8c" stroke-width="0.800"/><rect x="17.400" y="565.600" width="9.200" height="3" fill="none" stroke="#8c8c8c" stroke-width="0.800"/><path d="M11 561.500h3.600M11 567.100h3.600" stroke="#8c8c8c" stroke-width="0.800"/><g transform="translate(9.400 618.200) rotate(-46)"><path d="M0 0c.8-1.200 2-1.700 3.300-1.700H10v3.400H3.300C2 1.700.800 1.200 0 0z" fill="#3f72b5"/><path d="M11-1.700h11a1.700 1.700 0 0 1 0 3.400H11z" fill="#3f72b5"/><path d="M12-3.900h8" stroke="#3f72b5" stroke-width="1.400" stroke-linecap="round"/></g><path d="M21.600 616l-2.600 5 2.200-.3 1 1.600 1.500-3.600 1.500 3.600 1-1.600 2.200.3-2.600-5z" fill="#8753a6"/><path d="M27.30 614.00L26.58 614.93L26.61 616.12L25.48 616.45L24.81 617.42L23.70 617.02L22.59 617.42L21.92 616.45L20.79 616.12L20.82 614.930L20.100 614.000L20.820 613.070L20.790 611.880L21.920 611.550L22.590 610.580L23.700 610.980L24.810 610.580L25.480 611.550L26.610 611.880L26.580 613.070z" fill="#8753a6" stroke="#8753a6" stroke-width="0.6" stroke-linejoin="round"/><circle cx="23.7" cy="614" r="1.8" fill="#f7d66a"/><path d="M39.800 446.500h1v1h-1zM42 446.500h1v1h-1zM39.800 449.400h1v1h-1zM42 449.400h1v1h-1zM39.800 452.300h1v1h-1zM42 452.300h1v1h-1zM39.800 455.200h1v1h-1zM42 455.200h1v1h-1zM39.800 458.100h1v1h-1zM42 458.100h1v1h-1zM39.800 461.000h1v1h-1zM42 461.000h1v1h-1zM39.800 463.900h1v1h-1zM42 463.900h1v1h-1zM39.800 466.800h1v1h-1zM42 466.800h1v1h-1zM39.800 469.700h1v1h-1zM42 469.700h1v1h-1zM39.800 472.600h1v1h-1zM42 472.600h1v1h-1zM39.800 475.500h1v1h-1zM42 475.500h1v1h-1zM39.800 478.400h1v1h-1zM42 478.400h1v1h-1zM39.800 481.300h1v1h-1zM42 481.300h1v1h-1zM39.800 484.200h1v1h-1zM42 484.200h1v1h-1zM39.800 487.100h1v1h-1zM42 487.100h1v1h-1zM39.800 490.000h1v1h-1zM42 490.000h1v1h-1z" fill="#6f6f6f"/><rect x="1344" y="180" width="16" height="651" fill="#fbfbfb"/><rect x="1344.500" y="181.500" width="16" height="7.500" fill="#d2d2d2" stroke="#7a7a7a"/><path d="M1349 201.300l3.700-4 3.700 4" fill="none" stroke="#555" stroke-width="1.900"/><path d="M1349 823.500l3.700 4 3.700-4" fill="none" stroke="#555" stroke-width="1.900"/><rect x="1345" y="737" width="15" height="16.800" fill="#cdcdcd"/><rect x="1285" y="195" width="39" height="39" rx="3.500" fill="#572f58"/><path d="M1301.200 221c0-2.800-4-5-4-10a8 8 0 0 1 16 0c0 5-4 7.200-4 10z" fill="#f0c982"/><path d="M1301.200 222.100h8v1.200h-8zM1301.200 224.300h8v1.200h-8zM1302.200 226.500h6l-1.500 1.500h-3z" fill="#f0c982"/><path d="M379.500 414.500v16.200l3.700-3.500 2.700 6.100 2.300-1-2.700-5.900h5.300z" fill="#fff" stroke="#111" stroke-width="1" stroke-linejoin="round"/></svg>
<div class="b" style="left:297px;top:181px;width:793px;height:650px;overflow:hidden"><div class="b" style="left:-297px;top:-181px;width:1360px;height:853px">
<svg class="t" role="img" aria-label="如果您有使用 Windows Azure 活动目录权限管理" style="left:417px;top:175.7px" width="293" height="21" viewBox="0 -14 293 21" fill="#0a0a0a"><text class="sf" x="0" y="0" font-size="14" textLength="84.1" lengthAdjust="spacing">如果您有使用</text><text class="sf" x="178.8" y="0" font-size="14" textLength="112.2" lengthAdjust="spacing">活动目录权限管理</text><text x="87.68" y="0" font-size="12.6" textLength="51.11" lengthAdjust="spacingAndGlyphs">Windows</text><text x="142.35" y="0" font-size="12.6" textLength="32.92" lengthAdjust="spacingAndGlyphs">Azure</text></svg>
<svg class="t" role="img" aria-label="（" style="left:708.3px;top:175.7px" width="16" height="21" viewBox="0 -14 16 21" fill="#0a0a0a"><text class="sf" x="0" y="0" font-size="14">（</text></svg>
<svg class="t" role="img" aria-label="AAD RM" style="left:722px;top:175.7px" width="49.5" height="21" viewBox="0 -14 49.5 21" fill="#0a0a0a"><text x="0" y="0" font-size="12.6" textLength="25.91" lengthAdjust="spacingAndGlyphs">AAD</text><text x="27.9" y="0" font-size="12.6" textLength="19.6" lengthAdjust="spacingAndGlyphs">RM</text></svg>
<svg class="t" role="img" aria-label="）" style="left:770px;top:175.7px" width="16" height="21" viewBox="0 -14 16 21" fill="#0a0a0a"><text class="sf" x="0" y="0" font-size="14">）</text></svg>
<svg class="t" role="img" aria-label="，" style="left:778.6px;top:175.7px" width="16" height="21" viewBox="0 -14 16 21" fill="#0a0a0a"><text class="sf" x="0" y="0" font-size="14">，</text></svg>
<svg class="t" role="img" aria-label="请参阅" style="left:791.5px;top:175.7px" width="44" height="21" viewBox="0 -14 44 21" fill="#0a0a0a"><text class="sf" x="0" y="0" font-size="14" textLength="42" lengthAdjust="spacing">请参阅</text></svg>
<svg class="t" role="img" aria-label="Windows Azure 活动目" style="left:836.5px;top:175.7px" width="135.03" height="21" viewBox="0 -14 135.03 21" fill="#d4141e"><text class="sf" x="91.06" y="0" font-size="14" textLength="42" lengthAdjust="spacing">活动目</text><text x="0" y="0" font-size="12.6" textLength="51.11" lengthAdjust="spacingAndGlyphs" fill="#d4141e">Windows</text><text x="54.61" y="0" font-size="12.6" textLength="32.92" lengthAdjust="spacingAndGlyphs" fill="#d4141e">Azure</text><rect x="0" y="1.3" width="133.03" height="1.2" fill="#d4141e"/></svg>
<svg class="t" role="img" aria-label="录权限管理快速入门" style="left:417px;top:195.3px" width="127.5" height="21" viewBox="0 -14 127.5 21" fill="#d4141e"><text class="sf" x="0" y="0" font-size="14" textLength="125.4" lengthAdjust="spacing">录权限管理快速入门</text><rect x="0" y="1.7" width="125.5" height="1.2" fill="#d4141e"/></svg>
<svg class="t" role="img" aria-label="。" style="left:543px;top:195.3px" width="16" height="21" viewBox="0 -14 16 21" fill="#0a0a0a"><text class="sf" x="0" y="0" font-size="14">。</text></svg>
<svg class="t" role="img" aria-label="RMS" style="left:417.2px;top:243.8px" width="37.1" height="27.3" viewBox="0 -18.2 37.1 27.3" fill="#000"><text x="0" y="0" font-size="18.2" textLength="35.1" lengthAdjust="spacingAndGlyphs" font-weight="bold">RMS</text></svg>
<svg class="t" role="img" aria-label="加密" style="left:457px;top:243.4px" width="39.2" height="27.9" viewBox="0 -18.6 39.2 27.9" fill="#000"><text class="sf" x="0" y="0" font-size="18.6" font-weight="bold" textLength="37.2" lengthAdjust="spacing">加密</text></svg>
<svg class="t" role="img" aria-label="1." style="left:417.5px;top:295.6px" width="12.51" height="21" viewBox="0 -14 12.51 21" fill="#0a0a0a"><text x="0" y="0" font-size="12.6" textLength="10.51" lengthAdjust="spacingAndGlyphs">1.</text></svg>
<svg class="t" role="img" aria-label="选择“保护”" style="left:434.5px;top:295.6px" width="86" height="21" viewBox="0 -14 86 21" fill="#0a0a0a"><text class="sf" x="0 14 36 42 56 71.5" y="0" font-size="14">选择“保护”</text></svg>
<svg class="t" role="img" aria-label="&gt;" style="left:525.6px;top:295.6px" width="9.36" height="21" viewBox="0 -14 9.36 21" fill="#0a0a0a"><text x="0" y="0" font-size="12.6" textLength="7.36" lengthAdjust="spacingAndGlyphs">&gt;</text></svg>
<svg class="t" role="img" aria-label="“" style="left:536.6px;top:295.6px" width="16" height="21" viewBox="0 -14 16 21" fill="#0a0a0a"><text class="sf" x="8" y="0" font-size="14">“</text></svg>
<svg class="t" role="img" aria-label="AD RMS" style="left:553.4px;top:295.6px" width="51" height="21" viewBox="0 -14 51 21" fill="#0a0a0a"><text x="0" y="0" font-size="12.6" textLength="17.5" lengthAdjust="spacingAndGlyphs">AD</text><text x="21" y="0" font-size="12.6" textLength="28" lengthAdjust="spacingAndGlyphs">RMS</text></svg>
<svg class="t" role="img" aria-label="加密”" style="left:603.8px;top:295.6px" width="44" height="21" viewBox="0 -14 44 21" fill="#0a0a0a"><text class="sf" x="0 14 29.5" y="0" font-size="14">加密”</text></svg>
<svg class="t" role="img" aria-label="&gt;" style="left:651.7px;top:295.6px" width="9.36" height="21" viewBox="0 -14 9.36 21" fill="#0a0a0a"><text x="0" y="0" font-size="12.6" textLength="7.36" lengthAdjust="spacingAndGlyphs">&gt;</text></svg>
<svg class="t" role="img" aria-label="“限制访问”" style="left:662.6px;top:295.6px" width="86" height="21" viewBox="0 -14 86 21" fill="#0a0a0a"><text class="sf" x="8 14 28 42 56 71.5" y="0" font-size="14">“限制访问”</text></svg>
<svg class="t" role="img" aria-label="；" style="left:743px;top:295.6px" width="16" height="21" viewBox="0 -14 16 21" fill="#0a0a0a"><text class="sf" x="0" y="0" font-size="14">；</text></svg>
<svg class="t" role="img" aria-label="2." style="left:417.5px;top:335.6px" width="11.2" height="21" viewBox="0 -14 11.2 21" fill="#0a0a0a"><text x="0" y="0" font-size="12.6" textLength="9.2" lengthAdjust="spacingAndGlyphs" font-weight="bold">2.</text></svg>
<svg class="t" role="img" aria-label="选择您所需要的模板。如果您有多个服务器，请先将光标移至服务器名称上，在子菜单上" style="left:434.7px;top:335.6px" width="538" height="21" viewBox="0 -14 538 21" fill="#0a0a0a"><text class="sf" x="0" y="0" font-size="14" textLength="536" lengthAdjust="spacing">选择您所需要的模板。如果您有多个服务器，请先将光标移至服务器名称上，在子菜单上</text></svg>
<svg class="t" role="img" aria-label="将显示该服务器上的所有模板。您可以在子菜单中点击“刷新模板”来获取该服务器上最新" style="left:417px;top:355.4px" width="555" height="21" viewBox="0 -14 555 21" fill="#0a0a0a"><text class="sf" x="0" y="0" font-size="14" textLength="553" lengthAdjust="spacing">将显示该服务器上的所有模板。您可以在子菜单中点击“刷新模板”来获取该服务器上最新</text></svg>
<svg class="t" role="img" aria-label="的官方模板。当然，您也可以创建自定义模板，具体请参考" style="left:417px;top:375.6px" width="366" height="21" viewBox="0 -14 366 21" fill="#0a0a0a"><text class="sf" x="0" y="0" font-size="14" textLength="364" lengthAdjust="spacing">的官方模板。当然，您也可以创建自定义模板，具体请参考</text></svg>
<svg class="t" role="img" aria-label="“创建模板”" style="left:780.8px;top:375.6px" width="86" height="21" viewBox="0 -14 86 21" fill="#d4141e"><text class="sf" x="8 14 28 42 56 71.5" y="0" font-size="14">“创建模板”</text></svg>
<div class="b" style="left:781px;top:392px;width:77.5px;height:1.2px;background:#d4141e;"></div>
<svg class="t" role="img" aria-label="；" style="left:858px;top:375.6px" width="16" height="21" viewBox="0 -14 16 21" fill="#0a0a0a"><text class="sf" x="0" y="0" font-size="14">；</text></svg>
<svg class="t" role="img" aria-label="3." style="left:417.3px;top:601.6px" width="11.2" height="21" viewBox="0 -14 11.2 21" fill="#0a0a0a"><text x="0" y="0" font-size="12.6" textLength="9.2" lengthAdjust="spacingAndGlyphs" font-weight="bold">3.</text></svg>
<svg class="t" role="img" aria-label="如果您不想使用模板，请点击“限制访问”" style="left:434.7px;top:601.6px" width="268" height="21" viewBox="0 -14 268 21" fill="#0a0a0a"><text class="sf" x="0 14 28 42 56 70 84 98 112 126 140 154 168 190 196 210 224 238 253.5" y="0" font-size="14">如果您不想使用模板，请点击“限制访问”</text></svg>
<svg class="t" role="img" aria-label="；" style="left:693px;top:601.6px" width="16" height="21" viewBox="0 -14 16 21" fill="#0a0a0a"><text class="sf" x="0" y="0" font-size="14">；</text></svg>
<div class="b" style="left:417.6px;top:648px;width:4px;height:4px;background:#111;border-radius:2px;"></div>
<svg class="t" role="img" aria-label="当您首次登录" style="left:441px;top:640.6px" width="86" height="21" viewBox="0 -14 86 21" fill="#0a0a0a"><text class="sf" x="0" y="0" font-size="14" textLength="84" lengthAdjust="spacing">当您首次登录</text></svg>
<svg class="t" role="img" aria-label="RMS" style="left:528.8px;top:640.6px" width="27.2" height="21" viewBox="0 -14 27.2 21" fill="#0a0a0a"><text x="0" y="0" font-size="12.6" textLength="25.2" lengthAdjust="spacingAndGlyphs">RMS</text></svg>
<svg class="t" role="img" aria-label="服务器时，请输入您的账户名和密码。" style="left:558px;top:640.6px" width="240" height="21" viewBox="0 -14 240 21" fill="#0a0a0a"><text class="sf" x="0" y="0" font-size="14" textLength="238" lengthAdjust="spacing">服务器时，请输入您的账户名和密码。</text></svg>
<div class="b" style="left:417.6px;top:687px;width:4px;height:4px;background:#111;border-radius:2px;"></div>
<svg class="t" role="img" aria-label="点击图标" style="left:441.4px;top:679.8px" width="58" height="21" viewBox="0 -14 58 21" fill="#0a0a0a"><text class="sf" x="0" y="0" font-size="14" textLength="56" lengthAdjust="spacing">点击图标</text></svg>
<svg class="t" role="img" aria-label="添加您要授予阅读权限的用户；如允许所有人阅读该文件，请" style="left:590.7px;top:679.8px" width="382" height="21" viewBox="0 -14 382 21" fill="#0a0a0a"><text class="sf" x="0" y="0" font-size="14" textLength="380" lengthAdjust="spacing">添加您要授予阅读权限的用户；如允许所有人阅读该文件，请</text></svg>
<svg class="t" role="img" aria-label="单击右边的" style="left:441.4px;top:716px" width="72" height="21" viewBox="0 -14 72 21" fill="#0a0a0a"><text class="sf" x="0" y="0" font-size="14" textLength="70" lengthAdjust="spacing">单击右边的</text></svg>
<svg class="t" role="img" aria-label="图标；（如果您的系统默认邮箱为 Outlook 邮箱且拥有 Outlook 邮箱账户，" style="left:532.5px;top:716px" width="432" height="21" viewBox="0 -14 432 21" fill="#0a0a0a"><text class="sf" x="0" y="0" font-size="14" textLength="28" lengthAdjust="spacing">图标</text><text class="sf" x="28" y="0" font-size="14">；</text><text class="sf" x="28.1" y="0" font-size="14">（</text><text class="sf" x="42.1" y="0" font-size="14" textLength="154" lengthAdjust="spacing">如果您的系统默认邮箱为</text><text class="sf" x="246.5" y="0" font-size="14" textLength="70" lengthAdjust="spacing">邮箱且拥有</text><text class="sf" x="367" y="0" font-size="14" textLength="70" lengthAdjust="spacing">邮箱账户，</text><text x="199.6" y="0" font-size="12.6" textLength="43.42" lengthAdjust="spacingAndGlyphs">Outlook</text><text x="320.03" y="0" font-size="12.6" textLength="43.42" lengthAdjust="spacingAndGlyphs">Outlook</text></svg>
<svg class="t" role="img" aria-label="点击图标" style="left:441.4px;top:763px" width="58" height="21" viewBox="0 -14 58 21" fill="#0a0a0a"><text class="sf" x="0" y="0" font-size="14" textLength="56" lengthAdjust="spacing">点击图标</text></svg>
<svg class="t" role="img" aria-label="时，将弹出您邮箱内的联系人列表供您直接选择邮箱地址。您" style="left:590.7px;top:763px" width="382" height="21" viewBox="0 -14 382 21" fill="#0a0a0a"><text class="sf" x="0" y="0" font-size="14" textLength="380" lengthAdjust="spacing">时，将弹出您邮箱内的联系人列表供您直接选择邮箱地址。您</text></svg>
<svg class="t" role="img" aria-label="也可以直接输入邮箱地址的若干字母，然后点击图标" style="left:441.4px;top:802.6px" width="324" height="21" viewBox="0 -14 324 21" fill="#0a0a0a"><text class="sf" x="0" y="0" font-size="14" textLength="322" lengthAdjust="spacing">也可以直接输入邮箱地址的若干字母，然后点击图标</text></svg>
<svg class="t" role="img" aria-label="，系统将根据联系人列表自动" style="left:789px;top:802.6px" width="183.5" height="21" viewBox="0 -14 183.5 21" fill="#0a0a0a"><text class="sf" x="0" y="0" font-size="14" textLength="181.5" lengthAdjust="spacing">，系统将根据联系人列表自动</text></svg>
<svg class="t" role="img" aria-label="查找并显示所有匹配的联系人列表，供您选择。" style="left:441.4px;top:828.1px" width="296" height="21" viewBox="0 -14 296 21" fill="#8a8a8a"><text class="sf" x="0" y="0" font-size="14" textLength="294" lengthAdjust="spacing">查找并显示所有匹配的联系人列表，供您选择。</text></svg>
<svg class="i" style="left:0;top:0" width="1360" height="853" viewBox="0 0 1360 853"><rect x="540" y="423" width="38" height="61.500" fill="#e4d5ee"/><path d="M550.3 440v-3.600a8.600 8.600 0 0 1 17.200 0V440" fill="none" stroke="#eeaa4a" stroke-width="3"/><rect x="546.9" y="439" width="22.600" height="15.600" fill="#eeaa4a"/><path d="M559.5 442.200a2.500 2.500 0 0 1 1.400 4.600l.5 4.400h-3.800l.5-4.400a2.500 2.500 0 0 1 1.400-4.600z" fill="#f4ecf7"/><rect x="564.200" y="440" width="8.600" height="7.800" rx="2.300" fill="#2c6cb8" stroke="#e4d5ee" stroke-width="1.200"/><path d="M566.600 447h3.500v2.300h1.300v1.400h-1.300v1.100h1.300v1.400h-1.300v.6l-1.800 1.900-1.700-1.900z" fill="#2c6cb8"/><rect x="567.300" y="441.800" width="2.800" height="1.900" rx=".7" fill="#fff"/><path d="M589.1 440v-3.600a8.600 8.600 0 0 1 17.200 0V440" fill="none" stroke="#eeaa4a" stroke-width="3"/><rect x="585.7" y="439" width="22.600" height="15.600" fill="#eeaa4a"/><path d="M598.3000000000001 442.200a2.500 2.500 0 0 1 1.400 4.600l.5 4.400h-3.800l.5-4.400a2.500 2.500 0 0 1 1.400-4.600z" fill="#fdfdfd"/><circle cx="604.800" cy="448.500" r="7.400" fill="#fdfdfd"/><path d="M609.55 447.28L611.51 447.41L611.51 449.59L609.55 449.72L609.02 450.99L610.32 452.48L608.78 454.02L607.29 452.72L606.02 453.25L605.89 455.210L603.710 455.210L603.580 453.250L602.310 452.720L600.820 454.020L599.280 452.480L600.580 450.990L600.050 449.720L598.090 449.590L598.090 447.410L600.050 447.280L600.580 446.010L599.280 444.520L600.820 442.980L602.310 444.280L603.580 443.750L603.710 441.790L605.890 441.790L606.020 443.750L607.290 444.280L608.780 442.980L610.320 444.520L609.020 446.010z" fill="#555"/><circle cx="604.8" cy="448.5" r="2.1" fill="#fdfdfd"/><path d="M568.400 476.200h4.600l-2.300 2.500zM595.300 474.200h4.600l-2.300 2.500z" fill="#222"/><rect x="540.300" y="485.300" width="113.600" height="62" fill="#fdfdfd" stroke="#c4c4c4" stroke-width="1.300"/><rect x="541.400" y="487" width="20.600" height="17" fill="#e4d5ee"/><rect x="543.800" y="487" width="15.200" height="17" fill="#d9b9e9"/><path d="M548.200 495.200l2.400 2.600 4.400-5.200" fill="none" stroke="#a9a9a9" stroke-width="1.400"/><path d="M644.600 511.500v9l4.800-4.500zM644.600 532v9l4.800-4.500z" fill="#111"/><path d="M654.200 506.500H849.500V577" fill="none" stroke="#9a9a9a" stroke-width="1" stroke-dasharray="none"/><path d="M654.200 548v29" stroke="#c4c4c4" stroke-width="1.300"/><path d="M681.200 550.700h162.500" stroke="#b4b4b4" stroke-width="1"/><text x="567.800" y="520.200" font-size="11" textLength="28" lengthAdjust="spacingAndGlyphs" fill="#333" style="font-family:'Liberation Serif',serif" font-weight="bold">ADRMS</text><text x="567.800" y="541" font-size="11" textLength="66.500" lengthAdjust="spacing" fill="#333" style="font-family:'Liberation Serif',serif" font-weight="bold">IsvTenant006</text><text x="681.800" y="565.800" font-size="11" textLength="118" lengthAdjust="spacing" fill="#333" xml:space="preserve" style="font-family:'Liberation Serif',serif" font-weight="bold">Content Expire 30 Day</text><path d="M502 694H589V666" fill="none" stroke="#a8a8a8" stroke-width="1.800"/><rect x="517" y="670.2" width="7.400" height="14" rx="1" fill="#dcecfc" stroke="#5a8ed0" stroke-width="1"/><rect x="524.600" y="670.2" width="7.400" height="14" rx="1" fill="#eef6fe" stroke="#5a8ed0" stroke-width="1"/><path d="M513 688.8c0-3.600 2.600-5.400 6.800-5.400s6.900 1.800 6.900 5.400c0 .9-13.700.9-13.700 0z" fill="#6b9c3b" stroke="#4f7a2a" stroke-width="0.600"/><circle cx="519.800" cy="679" r="3.500" fill="#f1c594"/><path d="M516.100 678.6c0-2.600 1.500-4.300 3.700-4.300s3.700 1.700 3.700 4.300c-1.300-1.700-2.500-2.300-3.700-2.300s-2.400.600-3.700 2.300z" fill="#3a2e2e"/><path d="M563.200 684.6h2v2h-2zM567.200 684.6h2v2h-2zM571.200 684.6h2v2h-2z" fill="#222"/><path d="M502 777.2H589V749.2" fill="none" stroke="#a8a8a8" stroke-width="1.800"/><rect x="517" y="753.4" width="7.400" height="14" rx="1" fill="#dcecfc" stroke="#5a8ed0" stroke-width="1"/><rect x="524.600" y="753.4" width="7.400" height="14" rx="1" fill="#eef6fe" stroke="#5a8ed0" stroke-width="1"/><path d="M513 772c0-3.600 2.600-5.400 6.800-5.400s6.900 1.800 6.900 5.400c0 .9-13.700.9-13.700 0z" fill="#6b9c3b" stroke="#4f7a2a" stroke-width="0.600"/><circle cx="519.800" cy="762.2" r="3.500" fill="#f1c594"/><path d="M516.100 761.8c0-2.600 1.500-4.300 3.700-4.300s3.700 1.700 3.700 4.300c-1.300-1.700-2.500-2.300-3.700-2.300s-2.400.600-3.700 2.300z" fill="#3a2e2e"/><path d="M563.200 767.8h2v2h-2zM567.200 767.8h2v2h-2zM571.200 767.8h2v2h-2z" fill="#222"/><g transform="translate(524.3 713.7) scale(0.85)"><path d="M-6.500 10c0-3.600 2.400-5.200 6.500-5.200S6.500 6.400 6.500 10c0 .9-13 .9-13 0z" fill="#6b9c3b" stroke="#4f7a2a" stroke-width="0.600"/><circle cx="0" cy="1" r="3.300" fill="#f1c594"/><path d="M-3.500.600c0-2.500 1.400-4 3.500-4s3.500 1.500 3.500 4C2.300-.9 1.100-1.500 0-1.500S-2.300-.9-3.500.600z" fill="#5a3a22"/></g><g transform="translate(519 716.5) scale(1.0)"><path d="M-6.500 10c0-3.600 2.400-5.200 6.500-5.200S6.500 6.400 6.500 10c0 .9-13 .9-13 0z" fill="#6b9c3b" stroke="#4f7a2a" stroke-width="0.600"/><circle cx="0" cy="1" r="3.300" fill="#f1c594"/><path d="M-3.500.600c0-2.500 1.400-4 3.500-4s3.500 1.500 3.500 4C2.300-.9 1.100-1.500 0-1.500S-2.300-.9-3.500.600z" fill="#5a3a22"/></g><rect x="766.300" y="796.500" width="13" height="9.800" rx="1.500" fill="#e4f3fd" stroke="#8db6e6" stroke-width="1"/><path d="M768.200 798.600l4.600 4 4.600-4" fill="none" stroke="#9cc4ec" stroke-width="1"/><path d="M765 809.200l3.400 4.200 7-7.600" fill="none" stroke="#6aa82a" stroke-width="2.200"/><path d="M774.300 811.700v-1.600c0-2.200 1.800-3.200 4.400-3.200s4.300 1 4.300 3.200v1.600z" fill="#f0a020"/><circle cx="778.800" cy="803.400" r="3.200" fill="#f1c070"/><path d="M775.500 803.200c0-2.600 1.400-4 3.300-4s3.300 1.400 3.300 4c-1.100-1.600-2.200-2.200-3.300-2.200s-2.200.600-3.300 2.200z" fill="#a0501e"/><path d="M787.400 791v25" stroke="#a8a8a8" stroke-width="1.200"/></svg>
<svg class="t" role="img" aria-label="限制" style="left:546.8px;top:457.2px" width="24.400" height="16.800" viewBox="0 -11.2 24.4 16.8" fill="#333"><text x="0" y="0" font-size="11.2" textLength="22.4" lengthAdjust="spacing">限制</text></svg>
<svg class="t" role="img" aria-label="访问" style="left:542.8px;top:470px" width="24.400" height="16.800" viewBox="0 -11.2 24.4 16.8" fill="#333"><text x="0" y="0" font-size="11.2" textLength="22.4" lengthAdjust="spacing">访问</text></svg>
<svg class="t" role="img" aria-label="设置" style="left:586.5px;top:457.2px" width="24.400" height="16.800" viewBox="0 -11.2 24.4 16.8" fill="#333"><text x="0" y="0" font-size="11.2" textLength="22.4" lengthAdjust="spacing">设置</text></svg>
<svg class="t" role="img" aria-label="自由访问" style="left:568.2px;top:489.1px" width="46.800" height="16.800" viewBox="0 -11.2 46.8 16.8" fill="#bdbdbd"><text x="0" y="0" font-size="11.2" textLength="44.8" lengthAdjust="spacing">自由访问</text></svg>
<svg class="t" role="img" aria-label="限制访问" style="left:681.5px;top:510.8px" width="47.500" height="16.800" viewBox="0 -11.2 47.5 16.8" fill="#333"><text x="0" y="0" font-size="11.2" textLength="45.5" lengthAdjust="spacing">限制访问</text></svg>
<svg class="t" role="img" aria-label="刷新模板" style="left:681.5px;top:531px" width="47.500" height="16.800" viewBox="0 -11.2 47.5 16.8" fill="#333"><text x="0" y="0" font-size="11.2" textLength="45.5" lengthAdjust="spacing">刷新模板</text></svg>
<svg class="t" role="img" aria-label="读取" style="left:537.6px;top:674.8px" width="26" height="18" viewBox="0 -12 26 18" fill="#111"><text x="0" y="0" font-size="12" textLength="24" lengthAdjust="spacing">读取</text></svg>
<svg class="t" role="img" aria-label="读取" style="left:537.6px;top:758px" width="26" height="18" viewBox="0 -12 26 18" fill="#111"><text x="0" y="0" font-size="12" textLength="24" lengthAdjust="spacing">读取</text></svg>
</div></div>
<svg class="i" style="left:0;top:0" width="1360" height="853" viewBox="0 0 1360 853"><rect x="0" y="831" width="1360" height="22" fill="#fbfbfb"/><path d="M550.400 840v14l-7.800-7z" fill="#111"/><path d="M553.200 840.200c-1.300 4.200-1.300 9.400 0 13.600" fill="none" stroke="#111" stroke-width="2"/><path d="M577.300 840v14l-7.900-7z" fill="#111"/><rect x="589.500" y="836.500" width="114" height="20" fill="#fff" stroke="#9c9c9c"/><text x="593.300" y="851.200" font-size="13.600" textLength="68" lengthAdjust="spacingAndGlyphs" fill="#1a1a1a" style="font-family:'Liberation Sans',sans-serif">2681 / 3000</text><path d="M693.600 844.800h6l-3 2.900z" fill="#111"/><path d="M713 840v14l7.800-7z" fill="#111"/><path d="M740 840v14l7.900-7z" fill="#111"/><path d="M737.300 840v14" stroke="#111" stroke-width="2.400"/><path d="M760 839h8v1.900h-8z" fill="#2f5fa8"/><path d="M760.500 841v7.500h3.500" fill="none" stroke="#808080"/><path d="M768 842l3.400-3.200h1.700l-2.300 2.300h4.300v1.800h-4.300l2.300 2.300h-1.700z" fill="#4f9f7f"/><path d="M765.200 845h10.600v1.600h-10.600z" fill="#808080"/><path d="M765.700 846v8M775.300 846v8" stroke="#808080"/><path d="M786.200 839h10.600v1.900h-10.600z" fill="#cfcfcf"/><path d="M786.700 841v7.500h1.500M796.300 841v2.600" fill="none" stroke="#cfcfcf"/><path d="M791 845h10.800v1.800H791z" fill="#a9c1d9"/><path d="M801.300 846.500v8" stroke="#cfcfcf"/><path d="M786.200 850.400h4.300l-2-2.200h1.700l3 3-3 3h-1.700l2-2.200h-4.300z" fill="#a9c1d9"/><rect x="990" y="838" width="23" height="15" fill="#d9b9e9"/><rect x="995.700" y="840.500" width="9.600" height="14" fill="#fdfdfd" stroke="#808080" stroke-width="1.100"/><path d="M997.300 843.500h6.600M997.300 846.500h6.600M997.300 849.500h6.600" stroke="#a8a8a8"/><rect x="1020.500" y="839.800" width="10.300" height="8.600" fill="#fdfdfd" stroke="#808080" stroke-width="1.100"/><path d="M1022.300 842.500h6.800M1022.300 845.500h6.800" stroke="#a8a8a8"/><path d="M1020.500 854v-3.200h10.300v3.200" fill="none" stroke="#808080" stroke-width="1.100"/><rect x="1045.500" y="840.500" width="6" height="11.600" fill="#fdfdfd" stroke="#808080" stroke-width="1.100"/><rect x="1053.900" y="840.500" width="6" height="11.600" fill="#fdfdfd" stroke="#808080" stroke-width="1.100"/><path d="M1047.200 843.500h2.600M1047.200 846.500h2.600M1047.200 849.500h2.600M1055.600 843.500h2.600M1055.600 846.500h2.600M1055.600 849.500h2.600" stroke="#a8a8a8"/><path d="M1071 839.700h10v8.800h-10M1087 839.700h-3.300v8.800h3.300M1071 850.700h10v3.500M1087 850.700h-3.300v3.500" fill="none" stroke="#808080" stroke-width="1.100"/><path d="M1071.400 842.500h7.600M1071.400 845.500h7.600M1085.300 842.500h1.700M1085.300 845.500h1.700" stroke="#a8a8a8"/><text x="1114.600" y="851" font-size="13.600" textLength="32.500" lengthAdjust="spacingAndGlyphs" fill="#1a1a1a" style="font-family:'Liberation Sans',sans-serif">100%</text><path d="M1171 844h5.400l-2.700 2.900z" fill="#222"/><circle cx="1187.600" cy="846" r="7.200" fill="#fdfdfd" stroke="#3a3a3a" stroke-width="1"/><path d="M1183.600 846h8" stroke="#3a3a3a" stroke-width="1.200"/><path d="M1202 846.700h91" stroke="#3a3a3a" stroke-width="1.300"/><rect x="1245.200" y="842" width="3.700" height="7.800" fill="#2a2a2a"/><circle cx="1305.600" cy="846" r="7.200" fill="#fdfdfd" stroke="#3a3a3a" stroke-width="1"/><path d="M1301.600 846h8M1305.600 842v8" stroke="#3a3a3a" stroke-width="1.200"/><path d="M1334 854v-14h-7a7 7 0 0 0-7 7v7" fill="none" stroke="#1f72ea" stroke-width="2"/><path d="M1325 844.500v4M1329.500 844.500v4" stroke="#1f72ea" stroke-width="1.600"/><path d="M1347.300 850.700l11.400-11.400M1351.300 850.700l7.400-7.400M1355.300 850.700l3.400-3.400" stroke="#3a3a3a" stroke-width="1.200" stroke-linecap="round"/></svg>
</div>
</body></html>
